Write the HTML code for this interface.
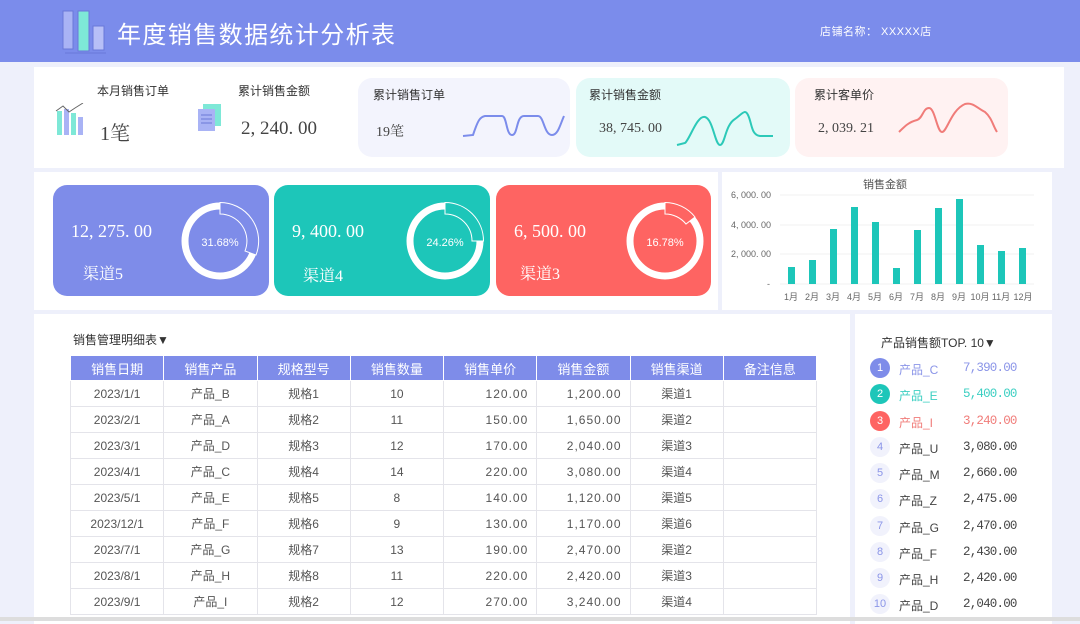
<!DOCTYPE html>
<html><head><meta charset="utf-8"><style>
*{margin:0;padding:0;box-sizing:border-box}
body{width:1080px;height:621px;overflow:hidden;background:#EEF0FB;font-family:"Liberation Sans","Noto Sans CJK SC",sans-serif;position:relative;color:#444}
.a{position:absolute}
.hdr{left:0;top:0;width:1080px;height:62px;background:#7B8CEB}
.w{background:#fff}
.serif{font-family:"Liberation Serif","Noto Serif CJK SC",serif}
.card{border-radius:14px;color:#fff}
table{border-collapse:collapse;font-size:12px}
td,th{border:1px solid #e4e4ea;height:26px;text-align:center;color:#555;font-weight:normal;padding:0 8px}
th{background:#7E8CE9;color:#fff;border-color:#fff;height:25px;font-size:13px}
td.r{text-align:right;letter-spacing:1px}
.rk{left:870px;width:20px;height:20px;border-radius:50%;background:#F1F2FC;color:#8b95e8;font-size:11px;text-align:center;line-height:20px}
.rn{left:899px;font-size:12px;color:#444}
.rv{left:963px;font-size:12.5px;letter-spacing:-0.8px;color:#444;font-family:"Liberation Mono",monospace}
</style></head><body>
<div class="a hdr"></div>
<svg class="a" style="left:60px;top:8px" width="50" height="46"><rect x="3" y="3" width="10" height="38" fill="#a9b3f5" stroke="#6a78d8"/><rect x="18" y="3" width="11" height="40" fill="#7ee8d7" stroke="#6a78d8"/><rect x="33" y="18" width="11" height="24" fill="#b7bff7" stroke="#6a78d8"/><line x1="5" y1="45" x2="46" y2="45" stroke="#6a78d8"/></svg>
<div class="a" style="left:117px;top:15px;font-size:24px;color:#fff;letter-spacing:1.4px">年度销售数据统计分析表</div>
<div class="a" style="left:820px;top:23px;font-size:11px;color:#fff;letter-spacing:0.5px">店铺名称： XXXXX店</div>

<div class="a w" style="left:34px;top:67px;width:1030px;height:101px"></div>
<svg class="a" style="left:55px;top:103px" width="30" height="34"><rect x="2" y="8" width="5" height="24" fill="#7ee8d7"/><rect x="9" y="6" width="5" height="26" fill="#a9b3f5"/><rect x="16" y="10" width="5" height="22" fill="#7ee8d7"/><rect x="23" y="14" width="5" height="18" fill="#a9b3f5"/><polyline points="1,8 8,3 14,9 20,5 28,0" fill="none" stroke="#666" stroke-width="1"/></svg>
<div class="a" style="left:97px;top:82px;font-size:12px;color:#333">本月销售订单</div>
<div class="a serif" style="left:100px;top:117px;font-size:20px;color:#444">1笔</div>
<svg class="a" style="left:197px;top:104px" width="26" height="30"><rect x="6" y="0" width="18" height="22" fill="#7ee8d7"/><rect x="1" y="5" width="17" height="22" fill="#a9b3f5"/><line x1="4" y1="11" x2="15" y2="11" stroke="#6a78d8"/><line x1="4" y1="15" x2="15" y2="15" stroke="#6a78d8"/><line x1="4" y1="19" x2="15" y2="19" stroke="#6a78d8"/></svg>
<div class="a" style="left:238px;top:82px;font-size:12px;color:#333">累计销售金额</div>
<div class="a serif" style="left:241px;top:118px;font-size:19px;color:#444">2, 240. 00</div>

<div class="a" style="left:358px;top:78px;width:212px;height:79px;background:#F3F4FD;border-radius:14px"></div>
<div class="a" style="left:373px;top:86px;font-size:12px;color:#333">累计销售订单</div>
<div class="a serif" style="left:376px;top:121px;font-size:14px">19笔</div>
<svg class="a" style="left:460px;top:110px" width="110" height="30"><path d="M3,26 L13,25 C18,10 20,7 25,6 L42,6 C47,6 46,25 52,25 C58,25 56,6 64,6 L78,6 C84,6 84,25 92,25 C98,25 100,15 104,6" fill="none" stroke="#7B8CEB" stroke-width="2"/></svg>

<div class="a" style="left:576px;top:78px;width:214px;height:79px;background:#E3FAF8;border-radius:14px"></div>
<div class="a" style="left:589px;top:86px;font-size:12px;color:#333">累计销售金额</div>
<div class="a serif" style="left:599px;top:121px;font-size:14px">38, 745. 00</div>
<svg class="a" style="left:675px;top:105px" width="110" height="45"><path d="M2,40 L10,38 C15,34 22,10 30,12 C38,14 40,40 45,40 C50,40 50,20 60,14 C68,8 70,4 73,10 C77,18 76,30 85,31 L98,31" fill="none" stroke="#2CC9B8" stroke-width="2"/></svg>

<div class="a" style="left:795px;top:78px;width:213px;height:79px;background:#FFF2F2;border-radius:14px"></div>
<div class="a" style="left:814px;top:86px;font-size:12px;color:#333">累计客单价</div>
<div class="a serif" style="left:818px;top:121px;font-size:14px">2, 039. 21</div>
<svg class="a" style="left:895px;top:98px" width="110" height="40"><path d="M4,34 C10,28 14,24 22,22 C28,20 28,10 34,10 C40,10 42,34 47,34 C52,34 56,12 70,6 C78,4 82,10 90,14 C97,20 98,28 102,34" fill="none" stroke="#F07C79" stroke-width="2"/></svg>

<div class="a w" style="left:34px;top:172px;width:684px;height:138px"></div>
<div class="a w" style="left:722px;top:172px;width:330px;height:138px"></div>

<div class="a card" style="left:53px;top:185px;width:216px;height:111px;background:#7E8CE9"></div>
<div class="a serif" style="left:71px;top:221px;font-size:18px;color:#fff">12, 275. 00</div>
<div class="a serif" style="left:83px;top:261px;font-size:16px;color:#fff">渠道5</div>
<svg class="a" style="left:180px;top:201px" width="82" height="82"><circle cx="40" cy="40" r="35" fill="none" stroke="#fff" stroke-width="7"/><path d="M40,1.5 A38.5,38.5 0 0 1 76,54 L65,50 A27,27 0 0 0 40,13 Z" fill="#7E8CE9" stroke="#fff" stroke-width="1"/><text x="40" y="45" fill="#fff" font-size="11" text-anchor="middle" font-family="Liberation Sans">31.68%</text></svg>

<div class="a card" style="left:274px;top:185px;width:216px;height:111px;background:#1DC6B9"></div>
<div class="a serif" style="left:292px;top:221px;font-size:18px;color:#fff">9, 400. 00</div>
<div class="a serif" style="left:303px;top:263px;font-size:16px;color:#fff">渠道4</div>
<svg class="a" style="left:405px;top:201px" width="82" height="82"><circle cx="40" cy="40" r="35" fill="none" stroke="#fff" stroke-width="7"/><path d="M40,1.5 A38.5,38.5 0 0 1 78.5,40 L67,40 A27,27 0 0 0 40,13 Z" fill="#1DC6B9" stroke="#fff" stroke-width="1"/><text x="40" y="45" fill="#fff" font-size="11" text-anchor="middle" font-family="Liberation Sans">24.26%</text></svg>

<div class="a card" style="left:496px;top:185px;width:215px;height:111px;background:#FE6462"></div>
<div class="a serif" style="left:514px;top:221px;font-size:18px;color:#fff">6, 500. 00</div>
<div class="a serif" style="left:520px;top:261px;font-size:16px;color:#fff">渠道3</div>
<svg class="a" style="left:625px;top:201px" width="82" height="82"><circle cx="40" cy="40" r="35" fill="none" stroke="#fff" stroke-width="7"/><path d="M40,1.5 A38.5,38.5 0 0 1 70,16 L61,23 A27,27 0 0 0 40,13 Z" fill="#FE6462" stroke="#fff" stroke-width="1"/><text x="40" y="45" fill="#fff" font-size="11" text-anchor="middle" font-family="Liberation Sans">16.78%</text></svg>

<svg class="a" style="left:722px;top:172px" width="330" height="138" font-family="Liberation Sans" font-size="9" fill="#666">
<text x="163" y="16" font-size="11" text-anchor="middle" fill="#555">销售金额</text>
<g stroke="#f0f0f0"><line x1="58" y1="23" x2="312" y2="23"/><line x1="58" y1="53" x2="312" y2="53"/><line x1="58" y1="82" x2="312" y2="82"/><line x1="58" y1="112" x2="312" y2="112"/></g>
<text x="9" y="26">6, 000. 00</text><text x="9" y="56">4, 000. 00</text><text x="9" y="85">2, 000. 00</text><text x="45" y="115">-</text>
<g fill="#1DC6B9">
<rect x="66" y="95" width="7" height="17"/><rect x="87" y="88" width="7" height="24"/><rect x="108" y="57" width="7" height="55"/><rect x="129" y="35" width="7" height="77"/><rect x="150" y="50" width="7" height="62"/><rect x="171" y="96" width="7" height="16"/><rect x="192" y="58" width="7" height="54"/><rect x="213" y="36" width="7" height="76"/><rect x="234" y="27" width="7" height="85"/><rect x="255" y="73" width="7" height="39"/><rect x="276" y="79" width="7" height="33"/><rect x="297" y="76" width="7" height="36"/></g>
<g text-anchor="middle"><text x="69" y="128">1月</text><text x="90" y="128">2月</text><text x="111" y="128">3月</text><text x="132" y="128">4月</text><text x="153" y="128">5月</text><text x="174" y="128">6月</text><text x="195" y="128">7月</text><text x="216" y="128">8月</text><text x="237" y="128">9月</text><text x="258" y="128">10月</text><text x="279" y="128">11月</text><text x="301" y="128">12月</text></g>
</svg>

<div class="a w" style="left:34px;top:314px;width:816px;height:310px"></div>
<div class="a w" style="left:855px;top:314px;width:197px;height:310px"></div>
<div class="a" style="left:73px;top:331px;font-size:12px;color:#333">销售管理明细表▼</div>
<table class="a" style="left:70px;top:355px;width:747px;table-layout:fixed">
<tr><th>销售日期</th><th>销售产品</th><th>规格型号</th><th>销售数量</th><th>销售单价</th><th>销售金额</th><th>销售渠道</th><th>备注信息</th></tr>
<tr><td>2023/1/1</td><td>产品_B</td><td>规格1</td><td>10</td><td class="r">120.00</td><td class="r">1,200.00</td><td>渠道1</td><td></td></tr>
<tr><td>2023/2/1</td><td>产品_A</td><td>规格2</td><td>11</td><td class="r">150.00</td><td class="r">1,650.00</td><td>渠道2</td><td></td></tr>
<tr><td>2023/3/1</td><td>产品_D</td><td>规格3</td><td>12</td><td class="r">170.00</td><td class="r">2,040.00</td><td>渠道3</td><td></td></tr>
<tr><td>2023/4/1</td><td>产品_C</td><td>规格4</td><td>14</td><td class="r">220.00</td><td class="r">3,080.00</td><td>渠道4</td><td></td></tr>
<tr><td>2023/5/1</td><td>产品_E</td><td>规格5</td><td>8</td><td class="r">140.00</td><td class="r">1,120.00</td><td>渠道5</td><td></td></tr>
<tr><td>2023/12/1</td><td>产品_F</td><td>规格6</td><td>9</td><td class="r">130.00</td><td class="r">1,170.00</td><td>渠道6</td><td></td></tr>
<tr><td>2023/7/1</td><td>产品_G</td><td>规格7</td><td>13</td><td class="r">190.00</td><td class="r">2,470.00</td><td>渠道2</td><td></td></tr>
<tr><td>2023/8/1</td><td>产品_H</td><td>规格8</td><td>11</td><td class="r">220.00</td><td class="r">2,420.00</td><td>渠道3</td><td></td></tr>
<tr><td>2023/9/1</td><td>产品_I</td><td>规格2</td><td>12</td><td class="r">270.00</td><td class="r">3,240.00</td><td>渠道4</td><td></td></tr>
</table>

<div class="a" style="left:881px;top:334px;font-size:12px;color:#333">产品销售额TOP. 10▼</div>
<div class="a rk" style="top:358px;background:#7E8CE9;color:#fff">1</div><div class="a rn" style="top:361px;color:#8b95e8">产品_C</div><div class="a rv" style="top:361px;color:#8b95e8">7,390.00</div>
<div class="a rk" style="top:384px;background:#1DC6B9;color:#fff">2</div><div class="a rn" style="top:387px;color:#3ccfc2">产品_E</div><div class="a rv" style="top:387px;color:#3ccfc2">5,400.00</div>
<div class="a rk" style="top:411px;background:#FE6462;color:#fff">3</div><div class="a rn" style="top:414px;color:#f07c79">产品_I</div><div class="a rv" style="top:414px;color:#f07c79">3,240.00</div>
<div class="a rk" style="top:437px">4</div><div class="a rn" style="top:440px">产品_U</div><div class="a rv" style="top:440px">3,080.00</div>
<div class="a rk" style="top:463px">5</div><div class="a rn" style="top:466px">产品_M</div><div class="a rv" style="top:466px">2,660.00</div>
<div class="a rk" style="top:489px">6</div><div class="a rn" style="top:492px">产品_Z</div><div class="a rv" style="top:492px">2,475.00</div>
<div class="a rk" style="top:516px">7</div><div class="a rn" style="top:519px">产品_G</div><div class="a rv" style="top:519px">2,470.00</div>
<div class="a rk" style="top:542px">8</div><div class="a rn" style="top:545px">产品_F</div><div class="a rv" style="top:545px">2,430.00</div>
<div class="a rk" style="top:568px">9</div><div class="a rn" style="top:571px">产品_H</div><div class="a rv" style="top:571px">2,420.00</div>
<div class="a rk" style="top:594px">10</div><div class="a rn" style="top:597px">产品_D</div><div class="a rv" style="top:597px">2,040.00</div>
<div class="a" style="left:0;top:617px;width:1080px;height:4px;background:#ddd"></div>
</body></html>
